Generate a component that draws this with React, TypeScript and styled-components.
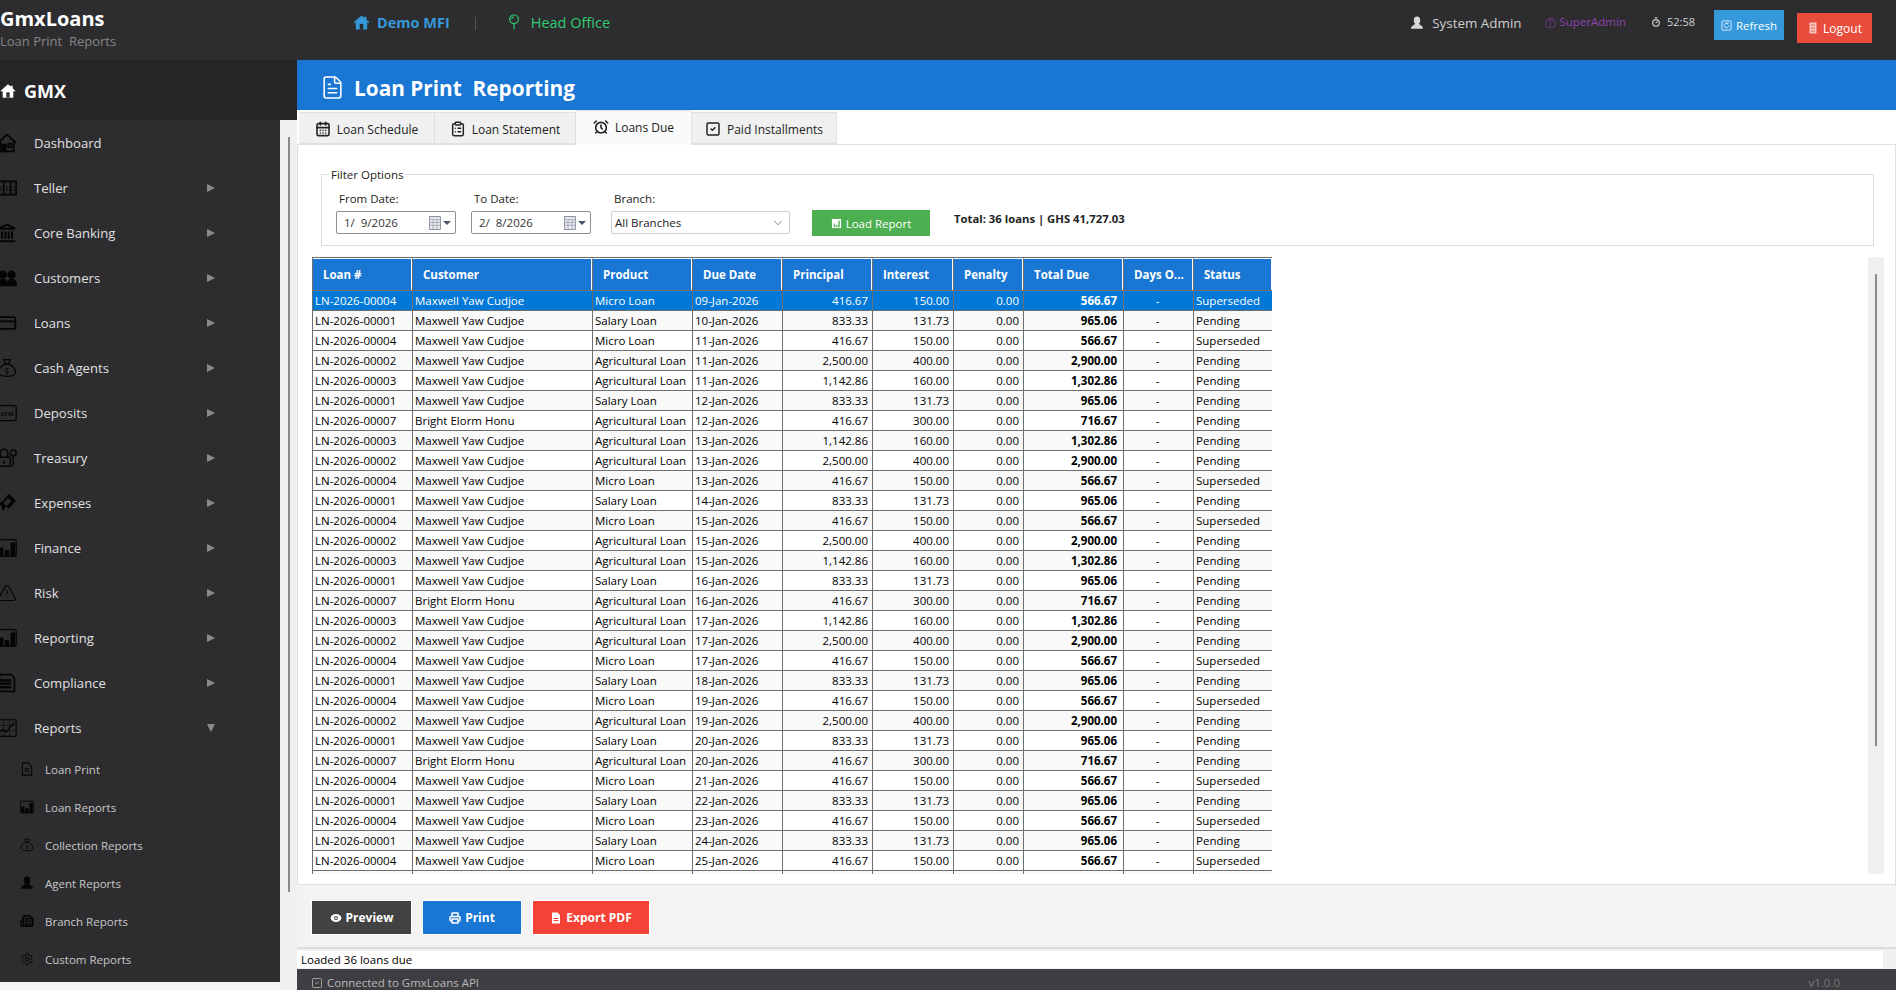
import React from "react";
import styled, { createGlobalStyle } from "styled-components";
import {
  AlarmClock,
  Building2,
  CalendarDays,
  ChevronDown,
  ClipboardList,
  CreditCard,
  FileText,
  Landmark,
  Printer,
  Settings,
  SquareCheck,
  Timer,
  TriangleAlert,
} from "lucide-react";

const FONT = `"Open Sans", "Noto Sans", "Liberation Sans", sans-serif`;

const GlobalStyle = createGlobalStyle`
  html, body {
    margin: 0;
    padding: 0;
    height: 100%;
    overflow: hidden;
    font-family: ${FONT};
    background: #f3f3f3;
  }
  * { box-sizing: border-box; }
`;

// drawn glyphs for what the icon packages don't have
const House = () => (
  <svg viewBox="0 0 24 24" width="100%" height="100%" fill="none" stroke="currentColor" strokeWidth="2.2">
    <path d="M1 12 12 2l11 10" />
    <path d="M4 10v12h16V10" />
    <rect x="6.5" y="14" width="4" height="8" fill="currentColor" />
    <rect x="13.5" y="13" width="4" height="4" />
  </svg>
);
const SolidHouse = () => (
  <svg viewBox="0 0 24 24" width="100%" height="100%" fill="currentColor">
    <path d="M12 2 1 11.5l1.2 1.5L4 11.6V22h16V11.6l1.8 1.4 1.2-1.5L19 8V4h-3v1.4z" />
    <rect x="9.5" y="14" width="5" height="8" fill="#2d2d30" />
  </svg>
);
const Cash = () => (
  <svg viewBox="0 0 24 24" width="100%" height="100%" fill="none" stroke="currentColor" strokeWidth="2">
    <rect x="1" y="4" width="22" height="16" rx="1" />
    <path d="M8 4v16M16 4v16" />
    <text x="4.5" y="15" fontSize="8" fill="currentColor" stroke="none" textAnchor="middle">S</text>
    <text x="12" y="15" fontSize="8" fill="currentColor" stroke="none" textAnchor="middle">$</text>
    <text x="19.5" y="15" fontSize="8" fill="currentColor" stroke="none" textAnchor="middle">D</text>
  </svg>
);
const People = () => (
  <svg viewBox="0 0 24 24" width="100%" height="100%" fill="currentColor">
    <circle cx="7" cy="8" r="5" />
    <circle cx="17.5" cy="8" r="5" />
    <path d="M0 22c0-6 3-9 7-9s6 3 6 9z" />
    <path d="M11 22c0-6 2.500-9 6.500-9S24 16 24 22z" />
  </svg>
);
const MoneyBag = () => (
  <svg viewBox="0 0 24 24" width="100%" height="100%" fill="none" stroke="currentColor" strokeWidth="1.500">
    <path d="M8 2h8l-2 5h-4z" />
    <path d="M10 7C4 10 2 14 2 17c0 4 4 5 10 5s10-1 10-5c0-3-2-7-8-10z" />
    <text x="12" y="19" fontSize="10" fill="currentColor" stroke="none" textAnchor="middle">$</text>
  </svg>
);
const Atm = () => (
  <svg viewBox="0 0 24 24" width="100%" height="100%" fill="none" stroke="currentColor" strokeWidth="1.500">
    <rect x="1" y="3" width="22" height="18" rx="2" />
    <text x="12" y="15" fontSize="7" fontWeight="700" fill="currentColor" stroke="none" textAnchor="middle">ATM</text>
  </svg>
);
const LockKey = () => (
  <svg viewBox="0 0 24 24" width="100%" height="100%" fill="none" stroke="currentColor" strokeWidth="1.800">
    <path d="M4 11V6a4.500 4.500 0 0 1 9 0v5" />
    <rect x="1" y="11" width="15" height="11" rx="1" />
    <path d="M8.500 15v4" />
    <circle cx="19.500" cy="6" r="3.500" />
    <path d="M19.500 9.500V20l-2 2" />
  </svg>
);
const FlyingMoney = () => (
  <svg viewBox="0 0 24 24" width="100%" height="100%" fill="currentColor">
    <path d="M14 1 23 9l-9 10-3-3-4 6-2-7-5-3 7-2z" />
    <path d="m13 6 4 4-6 6-3-4z" fill="#2d2d30" />
  </svg>
);
const BarsBox = () => (
  <svg viewBox="0 0 24 24" width="100%" height="100%" fill="none" stroke="currentColor" strokeWidth="1.500">
    <rect x="1" y="2" width="22" height="20" rx="2" />
    <path d="M3 12h4v10H3zM10 15h4v7h-4zM17 6h4v16h-4z" fill="currentColor" />
  </svg>
);
const Ledger = () => (
  <svg viewBox="0 0 24 24" width="100%" height="100%" fill="none" stroke="currentColor" strokeWidth="2">
    <path d="M3 2h14l4 4v16H3z" />
    <path d="M1 9h16M1 13h16M1 17h16" strokeWidth="3" />
  </svg>
);
const ChartBox = () => (
  <svg viewBox="0 0 24 24" width="100%" height="100%" fill="none" stroke="currentColor" strokeWidth="1.300">
    <rect x="1" y="2" width="22" height="20" rx="1" />
    <path d="M1 9h22M1 15h22M8 2v20M15 2v20" strokeWidth=".6" />
    <path d="m1 18 6-4 4 3 10-12" strokeWidth="1.600" />
  </svg>
);
const PageIcon = () => (
  <svg viewBox="0 0 24 24" width="100%" height="100%" fill="none" stroke="currentColor" strokeWidth="1.800">
    <path d="M4 1.500h10l6 6v15H4z" />
    <path d="M8 12h8M8 16h8" />
  </svg>
);
const Person = () => (
  <svg viewBox="0 0 24 24" width="100%" height="100%" fill="currentColor">
    <ellipse cx="12" cy="7.500" rx="5.500" ry="6.500" />
    <path d="M9.500 13 2 19v3h20v-3l-7.500-6z" />
  </svg>
);
const Pin = () => (
  <svg viewBox="0 0 24 24" width="100%" height="100%" fill="none" stroke="currentColor" strokeWidth="1.800">
    <circle cx="12" cy="8" r="6.500" />
    <path d="M12 14.500V23M12 4.500a3.500 3.500 0 0 0-3.500 3.500" />
  </svg>
);
const Badge = () => (
  <svg viewBox="0 0 24 24" width="100%" height="100%" fill="none" stroke="currentColor" strokeWidth="2">
    <rect x="2" y="7" width="20" height="15" rx="2" />
    <path d="M8 7V3h8v4M12 11v7" />
  </svg>
);
const RefreshBox = () => (
  <svg viewBox="0 0 24 24" width="100%" height="100%" fill="none" stroke="currentColor" strokeWidth="2">
    <rect x="2" y="2" width="20" height="20" rx="2" />
    <path d="M17 12a5 5 0 1 1-2-4M15 5v3.500h-3.500" />
  </svg>
);
const Door = () => (
  <svg viewBox="0 0 24 24" width="100%" height="100%" fill="currentColor">
    <path d="M5 1h14v22H5z" />
    <path d="M8 5h8v3H8zM8 11h8v3H8zM8 17h8v3H8z" fill="#e98a80" />
  </svg>
);
const Eye = () => (
  <svg viewBox="0 0 24 24" width="100%" height="100%" fill="currentColor">
    <path d="M12 4C6 4 2 8 1 12c1 4 5 8 11 8s10-4 11-8c-1-4-5-8-11-8z" />
    <circle cx="12" cy="12" r="4" fill="#424242" />
    <circle cx="12" cy="12" r="2" />
  </svg>
);
const SolidPage = () => (
  <svg viewBox="0 0 24 24" width="100%" height="100%" fill="currentColor">
    <path d="M4 1h11l5 5v17H4z" />
    <path d="M7 12h10v2H7zM7 16h10v2H7z" fill="#f44336" />
  </svg>
);
const WhiteBars = () => (
  <svg viewBox="0 0 24 24" width="100%" height="100%" fill="currentColor">
    <path d="M2 2h20v20H2z" />
    <path d="M6 12h3v8H6zM11 15h3v5h-3zM16 6h3v14h-3z" fill="#4caf50" />
  </svg>
);
const CalendarBox = () => (
  <svg viewBox="0 0 24 24" width="100%" height="100%" preserveAspectRatio="none" fill="#e6e8ee" stroke="#7b8290" strokeWidth="1.500">
    <rect x="1" y="1" width="22" height="22" />
    <path d="M1 6h22M1 11h22M1 16h22M8 6v17M16 6v17" strokeWidth=".9" />
  </svg>
);

const navItems = [
  { label: "Dashboard", icon: <House /> },
  { label: "Teller", icon: <Cash />, caret: "right" },
  { label: "Core Banking", icon: <Landmark size="100%" strokeWidth={2.4} />, caret: "right" },
  { label: "Customers", icon: <People />, caret: "right" },
  { label: "Loans", icon: <CreditCard size="100%" strokeWidth={2.2} />, caret: "right" },
  { label: "Cash Agents", icon: <MoneyBag />, caret: "right" },
  { label: "Deposits", icon: <Atm />, caret: "right" },
  { label: "Treasury", icon: <LockKey />, caret: "right" },
  { label: "Expenses", icon: <FlyingMoney />, caret: "right" },
  { label: "Finance", icon: <BarsBox />, caret: "right" },
  { label: "Risk", icon: <TriangleAlert size="100%" strokeWidth={1.4} />, caret: "right" },
  { label: "Reporting", icon: <BarsBox />, caret: "right" },
  { label: "Compliance", icon: <Ledger />, caret: "right" },
  { label: "Reports", icon: <ChartBox />, caret: "down" },
];

const subItems = [
  { label: "Loan Print", icon: <PageIcon /> },
  { label: "Loan Reports", icon: <BarsBox /> },
  { label: "Collection Reports", icon: <MoneyBag /> },
  { label: "Agent Reports", icon: <Person /> },
  { label: "Branch Reports", icon: <Building2 size="100%" strokeWidth={2.8} /> },
  { label: "Custom Reports", icon: <Settings size="100%" strokeWidth={1.5} /> },
];

const tabs = [
  { label: "Loan Schedule", icon: <CalendarDays size={16} strokeWidth={2.4} />, width: 136 },
  { label: "Loan Statement", icon: <ClipboardList size={16} strokeWidth={2.2} />, width: 141 },
  { label: "Loans Due", icon: <AlarmClock size={16} strokeWidth={2.4} />, width: 116, active: true },
  { label: "Paid Installments", icon: <SquareCheck size={16} strokeWidth={2.2} />, width: 145 },
];

const columns = [
  { title: "Loan #", width: 100 },
  { title: "Customer", width: 180 },
  { title: "Product", width: 100 },
  { title: "Due Date", width: 90 },
  { title: "Principal", width: 90 },
  { title: "Interest", width: 81 },
  { title: "Penalty", width: 70 },
  { title: "Total Due", width: 100 },
  { title: "Days O...", width: 70 },
  { title: "Status", width: 79 },
];

const MAXWELL = "Maxwell Yaw Cudjoe";
const loans: Record<string, string[]> = {
  "00001": [MAXWELL, "Salary Loan", "833.33", "131.73", "965.06", "Pending"],
  "00002": [MAXWELL, "Agricultural Loan", "2,500.00", "400.00", "2,900.00", "Pending"],
  "00003": [MAXWELL, "Agricultural Loan", "1,142.86", "160.00", "1,302.86", "Pending"],
  "00004": [MAXWELL, "Micro Loan", "416.67", "150.00", "566.67", "Superseded"],
  "00007": ["Bright Elorm Honu", "Agricultural Loan", "416.67", "300.00", "716.67", "Pending"],
};

const schedule: [string, string][] = [
  ["00004", "09"], ["00001", "10"], ["00004", "11"], ["00002", "11"], ["00003", "11"],
  ["00001", "12"], ["00007", "12"], ["00003", "13"], ["00002", "13"], ["00004", "13"],
  ["00001", "14"], ["00004", "15"], ["00002", "15"], ["00003", "15"], ["00001", "16"],
  ["00007", "16"], ["00003", "17"], ["00002", "17"], ["00004", "17"], ["00001", "18"],
  ["00004", "19"], ["00002", "19"], ["00001", "20"], ["00007", "20"], ["00004", "21"],
  ["00001", "22"], ["00004", "23"], ["00001", "24"], ["00004", "25"],
];

const App = () => (
  <>
    <GlobalStyle />
    <StyledPage>
      <StyledTopBar>
        <StyledBrandBlock>
          <StyledAppName>GmxLoans</StyledAppName>
          <StyledAppSub>Loan Print  Reports</StyledAppSub>
        </StyledBrandBlock>
        <StyledOrg>
          <StyledIcon $size={17} $color="#3498db"><SolidHouse /></StyledIcon>
          Demo MFI
        </StyledOrg>
        <StyledDivider />
        <StyledBranch>
          <StyledIcon $size={16} $color="#2ecc71"><Pin /></StyledIcon>
          Head Office
        </StyledBranch>
        <StyledTopRight>
          <StyledUser>
            <StyledIcon $size={14} $color="#d8d8d8"><Person /></StyledIcon>
            System Admin
          </StyledUser>
          <StyledRole>
            <StyledIcon $size={11} $color="#6c3a85"><Badge /></StyledIcon>
            SuperAdmin
          </StyledRole>
          <StyledClock>
            <StyledIcon $size={10} $color="#c8c8c8"><Timer size="100%" strokeWidth={3} /></StyledIcon>
            52:58
          </StyledClock>
          <StyledRefresh>
            <StyledIcon $size={11} $color="#dff0fb"><RefreshBox /></StyledIcon>
            Refresh
          </StyledRefresh>
          <StyledLogout>
            <StyledIcon $size={12} $color="#f7c4bd"><Door /></StyledIcon>
            Logout
          </StyledLogout>
        </StyledTopRight>
      </StyledTopBar>

      <StyledBody>
        <StyledSide>
          <StyledSideBrand>
            <StyledIcon $size={16} $color="#fff"><SolidHouse /></StyledIcon>
            GMX
          </StyledSideBrand>
          <StyledSideRow>
            <StyledNav>
              {navItems.map((item) => (
                <StyledNavItem key={item.label}>
                  <StyledNavIcon>{item.icon}</StyledNavIcon>
                  <StyledNavLabel>{item.label}</StyledNavLabel>
                  {item.caret && <StyledCaret $down={item.caret === "down"} />}
                </StyledNavItem>
              ))}
              {subItems.map((item) => (
                <StyledSubItem key={item.label}>
                  <StyledSubIcon>{item.icon}</StyledSubIcon>
                  {item.label}
                </StyledSubItem>
              ))}
            </StyledNav>
            <StyledSideGutter>
              <StyledSideThumb />
            </StyledSideGutter>
          </StyledSideRow>
        </StyledSide>

        <StyledMain>
          <StyledHeader>
            <StyledIcon $size={25} $color="#fff"><FileText size="100%" strokeWidth={1.5} /></StyledIcon>
            <StyledHeading>Loan Print  Reporting</StyledHeading>
          </StyledHeader>

          <StyledTabBar>
            {tabs.map((tab) => (
              <StyledTab key={tab.label} $active={!!tab.active} $width={tab.width}>
                {tab.icon}
                {tab.label}
              </StyledTab>
            ))}
          </StyledTabBar>

          <StyledPane>
            <StyledFilter>
              <StyledLegend>Filter Options</StyledLegend>
              <StyledFilterRow>
                <StyledField $width={120}>
                  <StyledLabel>From Date:</StyledLabel>
                  <StyledDateBox>
                    1/  9/2026
                    <StyledDateIcon>
                      <StyledCalendar><CalendarBox /></StyledCalendar>
                      <StyledMiniCaret />
                    </StyledDateIcon>
                  </StyledDateBox>
                </StyledField>
                <StyledField $width={120} $gap={15}>
                  <StyledLabel>To Date:</StyledLabel>
                  <StyledDateBox>
                    2/  8/2026
                    <StyledDateIcon>
                      <StyledCalendar><CalendarBox /></StyledCalendar>
                      <StyledMiniCaret />
                    </StyledDateIcon>
                  </StyledDateBox>
                </StyledField>
                <StyledField $width={179} $gap={20}>
                  <StyledLabel>Branch:</StyledLabel>
                  <StyledCombo>
                    All Branches
                    <ChevronDown size={14} strokeWidth={1.2} color="#555" />
                  </StyledCombo>
                </StyledField>
                <StyledLoadButton>
                  <StyledIcon $size={11} $color="#fff"><WhiteBars /></StyledIcon>
                  Load Report
                </StyledLoadButton>
                <StyledTotal>Total: 36 loans | GHS 41,727.03</StyledTotal>
              </StyledFilterRow>
            </StyledFilter>

            <StyledTableRow>
              <StyledTableClip>
                <StyledTable>
                  <colgroup>
                    {columns.map((col) => (
                      <StyledCol key={col.title} $width={col.width} />
                    ))}
                  </colgroup>
                  <thead>
                    <tr>
                      {columns.map((col) => (
                        <StyledTh key={col.title}>{col.title}</StyledTh>
                      ))}
                    </tr>
                  </thead>
                  <tbody>
                    {schedule.map(([id, day], i) => {
                      const [customer, product, principal, interest, total, status] = loans[id];
                      return (
                        <StyledRow key={i} $selected={i === 0} $tinted={i % 2 === 1}>
                          <StyledTd>LN-2026-{id}</StyledTd>
                          <StyledTd>{customer}</StyledTd>
                          <StyledTd>{product}</StyledTd>
                          <StyledTd>{day}-Jan-2026</StyledTd>
                          <StyledTd $align="right">{principal}</StyledTd>
                          <StyledTd $align="right">{interest}</StyledTd>
                          <StyledTd $align="right">0.00</StyledTd>
                          <StyledTd $align="right" $bold>{total}</StyledTd>
                          <StyledTd $align="center">-</StyledTd>
                          <StyledTd>{status}</StyledTd>
                        </StyledRow>
                      );
                    })}
                    <StyledRow $selected={false} $tinted>
                      {columns.map((col) => (
                        <StyledTd key={col.title} />
                      ))}
                    </StyledRow>
                  </tbody>
                </StyledTable>
              </StyledTableClip>
              <StyledTrack>
                <StyledThumb />
              </StyledTrack>
            </StyledTableRow>
          </StyledPane>

          <StyledActions>
            <StyledAction $bg="#424242" $width={99}>
              <StyledIcon $size={12} $color="#fff"><Eye /></StyledIcon>
              Preview
            </StyledAction>
            <StyledAction $bg="#1976d2" $width={98}>
              <StyledIcon $size={12} $color="#fff"><Printer size="100%" strokeWidth={3} /></StyledIcon>
              Print
            </StyledAction>
            <StyledAction $bg="#f44336" $width={116}>
              <StyledIcon $size={12} $color="#fff"><SolidPage /></StyledIcon>
              Export PDF
            </StyledAction>
          </StyledActions>

          <StyledStatusWrap>
            <StyledStatus>Loaded 36 loans due</StyledStatus>
          </StyledStatusWrap>

          <StyledFooter>
            <StyledIcon $size={12} $color="#b8b8b8"><SquareCheck size="100%" strokeWidth={1.6} /></StyledIcon>
            Connected to GmxLoans API
            <StyledVersion>v1.0.0</StyledVersion>
          </StyledFooter>
        </StyledMain>
      </StyledBody>
    </StyledPage>
  </>
);

const StyledPage = styled.div`
  width: 100vw;
  height: 100vh;
  display: flex;
  flex-direction: column;
  overflow: hidden;
`;

const StyledIcon = styled.span<{ $size: number; $color: string }>`
  width: ${(p) => p.$size}px;
  height: ${(p) => p.$size}px;
  color: ${(p) => p.$color};
  flex: none;
  display: inline-flex;
`;

const StyledTopBar = styled.header`
  height: 60px;
  flex: none;
  background: #2d2d30;
  display: flex;
  align-items: center;
`;

const StyledBrandBlock = styled.div`
  width: 353px;
  height: 60px;
  padding-top: 5px;
  flex: none;
`;

const StyledAppName = styled.div`
  font-size: 20px;
  line-height: 27px;
  font-weight: 700;
  color: #fff;
`;

const StyledAppSub = styled.div`
  font-size: 13px;
  line-height: 18px;
  color: #858585;
  white-space: pre;
`;

const StyledOrg = styled.div`
  display: flex;
  align-items: center;
  gap: 7px;
  margin-top: -16px;
  font-size: 14.5px;
  font-weight: 700;
  color: #3498db;
`;

const StyledDivider = styled.div`
  width: 1px;
  height: 13px;
  margin: -14px 30px 0 25px;
  background: #555;
`;

const StyledBranch = styled.div`
  display: flex;
  align-items: center;
  gap: 9px;
  margin-top: -16px;
  font-size: 14.5px;
  color: #2ecc71;
`;

const StyledTopRight = styled.div`
  margin-left: auto;
  display: flex;
  align-items: flex-start;
  height: 60px;
  padding-right: 24px;
`;

const StyledUser = styled.div`
  display: flex;
  align-items: center;
  gap: 8px;
  margin-top: 14px;
  line-height: 18px;
  font-size: 13.4px;
  color: #cfcfcf;
`;

const StyledRole = styled.div`
  display: flex;
  align-items: center;
  gap: 3px;
  margin: 14px 0 0 24px;
  line-height: 16px;
  font-size: 11.5px;
  color: #8e44ad;
`;

const StyledClock = styled.div`
  display: flex;
  align-items: center;
  gap: 6px;
  margin: 14px 0 0 25px;
  line-height: 16px;
  font-size: 11px;
  color: #cfcfcf;
`;

const StyledRefresh = styled.div`
  width: 70px;
  height: 30px;
  margin: 10px 0 0 19px;
  display: flex;
  align-items: center;
  justify-content: center;
  gap: 4px;
  background: #3498db;
  color: #fff;
  font-size: 11.5px;
`;

const StyledLogout = styled.div`
  width: 75px;
  height: 30px;
  margin: 13px 0 0 13px;
  display: flex;
  align-items: center;
  justify-content: center;
  gap: 4px;
  background: #e74c3c;
  color: #fff;
  font-size: 12px;
`;

const StyledBody = styled.div`
  flex: 1;
  min-height: 0;
  display: flex;
`;

const StyledSide = styled.aside`
  width: 297px;
  flex: none;
  display: flex;
  flex-direction: column;
`;

const StyledSideBrand = styled.div`
  height: 60px;
  flex: none;
  padding-top: 2px;
  background: #252528;
  display: flex;
  align-items: center;
  gap: 8px;
  color: #fff;
  font-size: 18px;
  font-weight: 700;
`;

const StyledSideRow = styled.div`
  flex: 1;
  min-height: 0;
  display: flex;
`;

const StyledNav = styled.nav`
  width: 280px;
  height: 862px;
  flex: none;
  background: #2d2d30;
`;

const StyledNavItem = styled.div`
  height: 45px;
  display: flex;
  align-items: center;
`;

const StyledNavIcon = styled.span`
  width: 20px;
  height: 20px;
  margin-left: -3px;
  flex: none;
  color: #050505;
  display: inline-flex;
`;

const StyledNavLabel = styled.span`
  width: 173px;
  margin-left: 17px;
  font-size: 13.1px;
  color: #e0e0e0;
`;

const StyledCaret = styled.span<{ $down: boolean }>`
  width: 0;
  height: 0;
  ${(p) =>
    p.$down
      ? `border-left: 4.5px solid transparent;
         border-right: 4.5px solid transparent;
         border-top: 8px solid #8a8a8a;`
      : `border-top: 4.5px solid transparent;
         border-bottom: 4.5px solid transparent;
         border-left: 8px solid #8a8a8a;`}
`;

const StyledSubItem = styled.div`
  height: 38px;
  padding-left: 20px;
  display: flex;
  align-items: center;
  gap: 11px;
  font-size: 11.5px;
  color: #c8c8c8;
`;

const StyledSubIcon = styled.span`
  width: 14px;
  height: 14px;
  flex: none;
  color: #050505;
  display: inline-flex;
`;

const StyledSideGutter = styled.div`
  flex: 1;
  padding: 17px 0 0 8px;
  background: #f0f0f0;
`;

const StyledSideThumb = styled.div`
  width: 2px;
  height: 755px;
  background: #8a8a8a;
`;

const StyledMain = styled.main`
  flex: 1;
  min-width: 0;
  display: flex;
  flex-direction: column;
`;

const StyledHeader = styled.div`
  height: 50px;
  flex: none;
  padding: 5px 0 0 23px;
  background: #1976d2;
  display: flex;
  align-items: center;
  gap: 9px;
`;

const StyledHeading = styled.h1`
  margin: 0;
  font-size: 20.8px;
  font-weight: 700;
  color: #fff;
  white-space: pre;
`;

const StyledTabBar = styled.div`
  height: 34px;
  flex: none;
  padding-left: 2px;
  background: #fff;
  display: flex;
  align-items: flex-end;
`;

const StyledTab = styled.div<{ $active: boolean; $width: number }>`
  width: ${(p) => p.$width}px;
  height: ${(p) => (p.$active ? 35 : 32)}px;
  margin-bottom: ${(p) => (p.$active ? -1 : 0)}px;
  padding-bottom: ${(p) => (p.$active ? 1 : 0)}px;
  padding-top: ${(p) => (p.$active ? 0 : 2)}px;
  display: flex;
  align-items: center;
  justify-content: center;
  gap: 6px;
  position: relative;
  background: ${(p) => (p.$active ? "#fafafa" : "#f0f0f0")};
  border: 1px solid #e0e0e0;
  border-left-width: 0;
  border-bottom-color: ${(p) => (p.$active ? "#fafafa" : "#e0e0e0")};
  font-size: 12px;
  color: #222;
`;

const StyledPane = styled.section`
  height: 741px;
  flex: none;
  padding: 22px 11px 11px 14px;
  background: #fff;
  border: 1px solid #e0e0e0;
  display: flex;
  flex-direction: column;
`;

const StyledFilter = styled.fieldset`
  margin: 0 10px 11px 9px;
  padding: 9px 14px 11px;
  min-width: 0;
  flex: none;
  border: 1px solid #dcdcdc;
`;

const StyledLegend = styled.legend`
  margin-left: -7px;
  padding: 0 2px;
  font-size: 11.5px;
  color: #222;
`;

const StyledFilterRow = styled.div`
  display: flex;
  align-items: flex-end;
`;

const StyledField = styled.div<{ $width: number; $gap?: number }>`
  width: ${(p) => p.$width}px;
  margin-left: ${(p) => p.$gap || 0}px;
  flex: none;
`;

const StyledLabel = styled.div`
  height: 17px;
  padding-left: 3px;
  margin-bottom: 3px;
  font-size: 11.5px;
  line-height: 16px;
  color: #222;
`;

const StyledDateBox = styled.div`
  height: 23px;
  padding: 0 4px 0 7px;
  display: flex;
  align-items: center;
  justify-content: space-between;
  background: #fff;
  border: 1px solid #8f8f8f;
  border-radius: 2px;
  font-size: 11.5px;
  color: #333;
  white-space: pre;
`;

const StyledDateIcon = styled.span`
  width: 22px;
  height: 14px;
  display: flex;
  align-items: center;
  justify-content: space-between;
`;

const StyledCalendar = styled.span`
  width: 12px;
  height: 14px;
  flex: none;
  display: inline-flex;
`;

const StyledMiniCaret = styled.span`
  width: 0;
  height: 0;
  flex: none;
  border-left: 4px solid transparent;
  border-right: 4px solid transparent;
  border-top: 4px solid #4a5568;
`;

const StyledCombo = styled.div`
  height: 23px;
  padding: 0 4px 0 3px;
  display: flex;
  align-items: center;
  justify-content: space-between;
  background: #fff;
  border: 1px solid #cfcfcf;
  border-radius: 2px;
  font-size: 11.5px;
  color: #222;
`;

const StyledLoadButton = styled.div`
  width: 118px;
  height: 26px;
  margin: 0 24px -2px 22px;
  flex: none;
  display: flex;
  align-items: center;
  justify-content: center;
  gap: 4px;
  background: #4caf50;
  color: #fff;
  font-size: 11.5px;
`;

const StyledTotal = styled.div`
  margin-bottom: 8px;
  font-size: 11.3px;
  font-weight: 700;
  color: #222;
`;

const StyledTableRow = styled.div`
  flex: 1;
  min-height: 0;
  display: flex;
  justify-content: space-between;
`;

const StyledTableClip = styled.div`
  width: 960px;
  height: 617px;
  overflow: hidden;
`;

const StyledTable = styled.table`
  width: 960px;
  table-layout: fixed;
  border-collapse: separate;
  border-spacing: 0;
  border-top: 1px solid #6e6e6e;
  border-left: 1px solid #6e6e6e;
`;

const StyledCol = styled.col<{ $width: number }>`
  width: ${(p) => p.$width}px;
`;

const StyledTh = styled.th`
  height: 33px;
  padding: 0 0 0 10px;
  background: #1976d2;
  border-top: 1px solid #fff;
  border-right: 1px solid #6e6e6e;
  border-bottom: 1px solid #6e6e6e;
  box-shadow: inset -1px 0 0 #fff;
  text-align: left;
  font-size: 11.5px;
  font-weight: 700;
  color: #fff;
`;

const StyledRow = styled.tr<{ $selected: boolean; $tinted: boolean }>`
  background: ${(p) => (p.$selected ? "#0078d7" : p.$tinted ? "#f9f9f9" : "#fff")};
  color: ${(p) => (p.$selected ? "#fff" : "#000")};
`;

const StyledTd = styled.td<{ $align?: string; $bold?: boolean }>`
  height: 20px;
  padding: 0 ${(p) => (p.$bold ? 6 : 4)}px 0 2px;
  border-right: 1px solid #6e6e6e;
  border-bottom: 1px solid #6e6e6e;
  text-align: ${(p) => p.$align || "left"};
  font-size: 11.5px;
  font-weight: ${(p) => (p.$bold ? 700 : 400)};
  white-space: nowrap;
  overflow: hidden;
`;

const StyledTrack = styled.div`
  width: 16px;
  height: 617px;
  padding: 17px 0 0 7px;
  background: #efefef;
`;

const StyledThumb = styled.div`
  width: 2px;
  height: 472px;
  background: #8a8a8a;
`;

const StyledActions = styled.div`
  height: 62px;
  flex: none;
  padding: 16px 0 0 15px;
  display: flex;
  align-items: flex-start;
  gap: 12px;
  background: #f3f3f3;
`;

const StyledAction = styled.div<{ $bg: string; $width: number }>`
  width: ${(p) => p.$width}px;
  height: 33px;
  display: flex;
  align-items: center;
  justify-content: center;
  gap: 4px;
  background: ${(p) => p.$bg};
  box-shadow: 0 0 0 1px #fff;
  color: #fff;
  font-size: 12px;
  font-weight: 700;
`;

const StyledStatusWrap = styled.div`
  height: 22px;
  flex: none;
  padding: 2px 13px 1px 0;
  background: #f0f0f0;
  border-top: 2px solid #dcdcdc;
`;

const StyledStatus = styled.div`
  height: 17px;
  padding-left: 4px;
  background: #fff;
  font-size: 11.5px;
  line-height: 17px;
  color: #000;
`;

const StyledFooter = styled.footer`
  height: 21px;
  flex: none;
  padding: 7px 56px 0 14px;
  display: flex;
  align-items: center;
  gap: 4px;
  background: #3e3e42;
  font-size: 11.5px;
  line-height: 14px;
  color: #b8b8b8;
`;

const StyledVersion = styled.span`
  margin-left: auto;
  color: #777;
`;

export default App;
